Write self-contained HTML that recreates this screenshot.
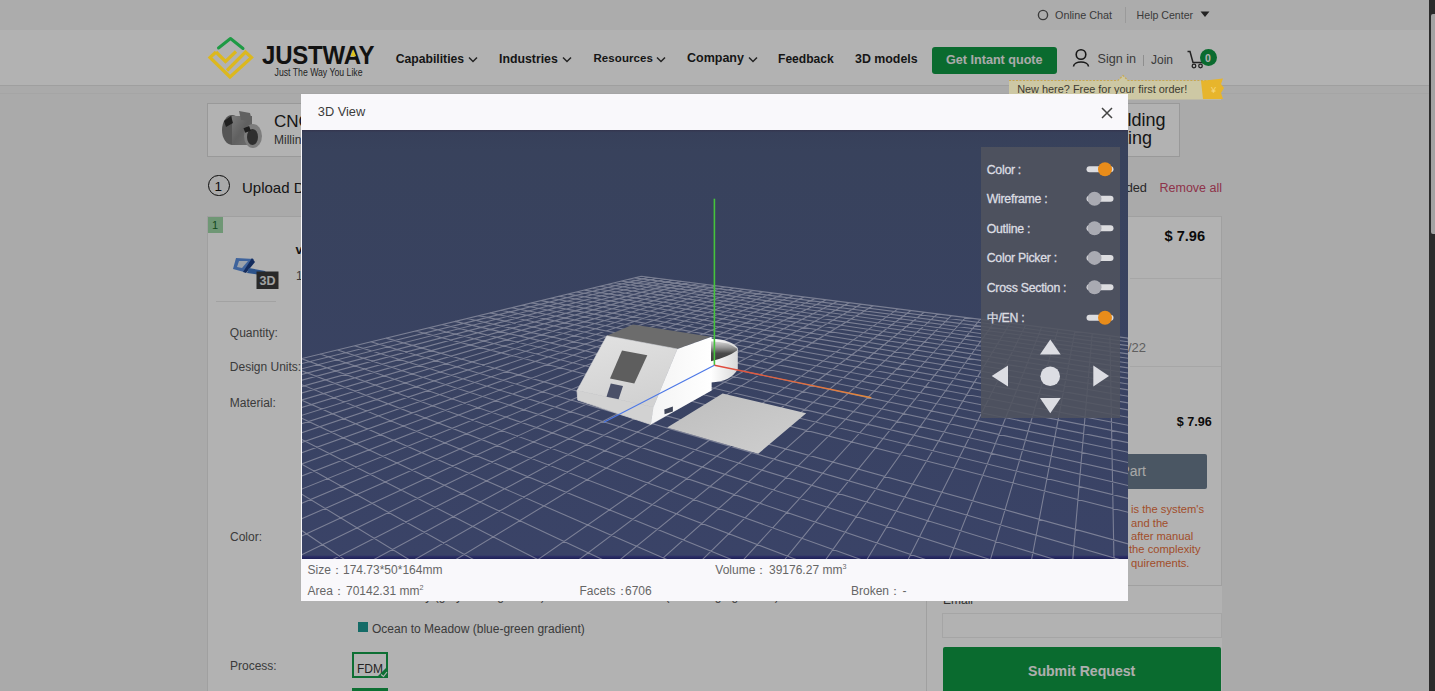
<!DOCTYPE html>
<html><head><meta charset="utf-8"><style>
html,body{margin:0;padding:0;width:1435px;height:691px;overflow:hidden;background:#f4f4f4;font-family:"Liberation Sans",sans-serif}
.r{position:absolute}
.t{position:absolute;white-space:nowrap;line-height:1}
sup{font-size:60%;vertical-align:top;position:relative;top:-1px}
#ov{position:absolute;left:0;top:0;width:1429px;height:691px;background:rgba(0,0,0,0.3)}
#sb{position:absolute;left:1429px;top:0;width:6px;height:691px;background:#2b2b2b}
</style></head><body>
<div id="page">
<div class="r" style="left:0px;top:0px;width:1429px;height:30px;background:#f7f7f7"></div>
<div class="r" style="left:0px;top:30px;width:1429px;height:55px;background:#ffffff"></div>
<div class="r" style="left:0px;top:85px;width:1429px;height:1px;background:#e4e4e4"></div>
<div class="r" style="left:0px;top:93px;width:1429px;height:1px;background:#ededed"></div>
<svg class="r" style="left:1036px;top:8px" width="14" height="14"><circle cx="7" cy="7" r="4.6" fill="none" stroke="#555" stroke-width="1.4"/></svg>
<div class="t " style="left:1055px;top:10.06px;font-size:10.8px;font-weight:400;color:#555;">Online Chat</div>
<div class="r" style="left:1125px;top:7px;width:1px;height:16px;background:#ddd"></div>
<div class="t " style="left:1136.6px;top:10.23px;font-size:10.6px;font-weight:400;color:#555;">Help Center</div>
<svg class="r" style="left:1200px;top:11px" width="10" height="7"><path d="M0.5 0.5H9.5L5 6Z" fill="#333"/></svg>
<div class="t " style="left:262px;top:43.68px;font-size:24px;font-weight:700;color:#1a1a1a;letter-spacing:-0.2px;transform:scaleY(1.1);transform-origin:0 80%">JUSTWAY</div>
<div class="t " style="left:274.6px;top:69.34px;font-size:8.7px;font-weight:400;color:#333;transform:scaleY(1.15);transform-origin:0 80%">Just The Way You Like</div>
<div class="t " style="left:395.7px;top:52.67px;font-size:12.2px;font-weight:700;color:#1f1f1f;">Capabilities</div>
<svg class="r" style="left:468px;top:56px" width="10" height="7"><path d="M1 1.5L5 5.5L9 1.5" fill="none" stroke="#333" stroke-width="1.5"/></svg>
<div class="t " style="left:499px;top:52.59px;font-size:12.3px;font-weight:700;color:#1f1f1f;">Industries</div>
<svg class="r" style="left:562px;top:56px" width="10" height="7"><path d="M1 1.5L5 5.5L9 1.5" fill="none" stroke="#333" stroke-width="1.5"/></svg>
<div class="t " style="left:593.4px;top:53.27px;font-size:11.5px;font-weight:700;color:#1f1f1f;letter-spacing:0.1px">Resources</div>
<svg class="r" style="left:656px;top:56px" width="10" height="7"><path d="M1 1.5L5 5.5L9 1.5" fill="none" stroke="#333" stroke-width="1.5"/></svg>
<div class="t " style="left:687px;top:52.42px;font-size:12.5px;font-weight:700;color:#1f1f1f;">Company</div>
<svg class="r" style="left:748px;top:56px" width="10" height="7"><path d="M1 1.5L5 5.5L9 1.5" fill="none" stroke="#333" stroke-width="1.5"/></svg>
<div class="t " style="left:778px;top:52.76px;font-size:12.1px;font-weight:700;color:#1f1f1f;">Feedback</div>
<div class="t " style="left:855px;top:52.50px;font-size:12.4px;font-weight:700;color:#1f1f1f;">3D models</div>
<div class="r" style="left:932px;top:47px;width:125px;height:27px;background:#0f9a44;border-radius:3px"></div>
<div class="t " style="left:946px;top:54.33px;font-size:12.6px;font-weight:700;color:#f4f4f4;">Get Intant quote</div>
<svg class="r" style="left:1071px;top:48px" width="20" height="20"><circle cx="10" cy="6.5" r="4.8" fill="none" stroke="#222" stroke-width="1.6"/><path d="M2.5 18.5 C3 12.5 17 12.5 17.5 18.5" fill="none" stroke="#222" stroke-width="1.6"/></svg>
<div class="t " style="left:1097.5px;top:53.33px;font-size:12.6px;font-weight:400;color:#555;">Sign in</div>
<div class="r" style="left:1143px;top:55px;width:1px;height:11px;background:#ccc"></div>
<div class="t " style="left:1151px;top:53.84px;font-size:12px;font-weight:400;color:#555;">Join</div>
<svg class="r" style="left:1186px;top:48px" width="20" height="22"><path d="M1.5 3.5H4L7 14.5H16.5L18 8" fill="none" stroke="#333" stroke-width="1.5"/><circle cx="8" cy="18" r="1.8" fill="none" stroke="#333" stroke-width="1.3"/><circle cx="14.5" cy="18" r="1.8" fill="none" stroke="#333" stroke-width="1.3"/></svg>
<div class="r" style="left:1200px;top:49px;width:17px;height:17px;border-radius:50%;background:#0f9a44"></div>
<div class="t " style="left:1205px;top:52.61px;font-size:10.5px;font-weight:700;color:#fff;">0</div>
<div class="r" style="left:207px;top:103px;width:300px;height:54px;background:#ffffff;border:1px solid #dcdcdc;box-sizing:border-box"></div>
<svg class="r" style="left:215px;top:103px" width="55" height="52">
<defs><linearGradient id="met" x1="0" y1="0" x2="1" y2="1"><stop offset="0" stop-color="#b0b0b0"/><stop offset="0.5" stop-color="#8a8a8a"/><stop offset="1" stop-color="#a0a0a0"/></linearGradient></defs>
<ellipse cx="17" cy="27" rx="10" ry="15" fill="#7a7a7a"/>
<rect x="17" y="13" width="20" height="29" fill="url(#met)"/>
<path d="M24 8 L35 10 L37 18 L26 17 Z" fill="#8c8c8c"/>
<ellipse cx="38" cy="33" rx="9" ry="12" fill="#b4b4b4"/>
<ellipse cx="37.5" cy="34" rx="5.5" ry="8" fill="#444"/>
<rect x="29" y="24" width="6" height="5" fill="#2a2a2a" transform="rotate(-20 32 26)"/>
<path d="M9 18 L16 13 L18 20 L11 24Z" fill="#2e2e2e"/>
</svg>
<div class="t " style="left:274px;top:112.61px;font-size:17px;font-weight:400;color:#222;">CNC Machining</div>
<div class="t " style="left:274px;top:134.44px;font-size:12px;font-weight:400;color:#444;">Milling, Turning</div>
<div class="r" style="left:1000px;top:103px;width:180px;height:54px;background:#ffffff;border:1px solid #dcdcdc;box-sizing:border-box"></div>
<div class="t " style="left:900px;top:110.76px;font-size:18px;font-weight:400;color:#222;width:265.5px;text-align:right">Injection Molding</div>
<div class="t " style="left:900px;top:128.76px;font-size:18px;font-weight:400;color:#222;width:252px;text-align:right">Urethane Casting</div>
<div class="r" style="left:208.3px;top:174.8px;width:21.4px;height:21.4px;border:1.6px solid #111;border-radius:50%;box-sizing:border-box"></div>
<div class="t " style="left:214.6px;top:179.87px;font-size:13.5px;font-weight:400;color:#111;">1</div>
<div class="t " style="left:242px;top:180.30px;font-size:15px;font-weight:400;color:#222;">Upload Drawings</div>
<div class="t " style="left:1000px;top:181.96px;font-size:12.8px;font-weight:400;color:#3a3a3a;width:147px;text-align:right">2 files uploaded</div>
<div class="t " style="left:1159.5px;top:182.22px;font-size:12.5px;font-weight:400;color:#cc4a6a;">Remove all</div>
<div class="r" style="left:207px;top:216px;width:720px;height:500px;background:#ffffff;border:1px solid #e6e6e6;box-sizing:border-box"></div>
<div class="r" style="left:208px;top:217px;width:15px;height:16px;background:#9fd9a8"></div>
<div class="t " style="left:212px;top:220.19px;font-size:11px;font-weight:400;color:#1c6a2c;">1</div>
<svg class="r" style="left:228px;top:252px" width="60" height="40">
<path d="M8 6 L26 7 L16 20 L5 17 Z" fill="#5a8ee0"/>
<path d="M11 9 L20 9 L14 16 L9 15Z" fill="#dfe8f5"/>
<path d="M24 6 L27 10 L18 21 L15 20 Z" fill="#1d3f86"/>
<path d="M21 16 L37 19 L40 24 L19 21 Z" fill="#3f78c8"/>
<rect x="28.5" y="19.5" width="22" height="17.5" fill="#3c3c3c"/>
<text x="39.5" y="33" font-family="Liberation Sans" font-size="12.5" font-weight="700" fill="#e8e8e8" text-anchor="middle">3D</text>
</svg>
<div class="t " style="left:295.5px;top:243.00px;font-size:13px;font-weight:700;color:#222;">v</div>
<div class="t " style="left:296px;top:269.84px;font-size:12px;font-weight:400;color:#555;">1</div>
<div class="r" style="left:216px;top:301px;width:60px;height:1px;background:#e8e8e8"></div>
<div class="t " style="left:229.8px;top:326.84px;font-size:12px;font-weight:400;color:#555;">Quantity:</div>
<div class="t " style="left:229.8px;top:361.14px;font-size:12px;font-weight:400;color:#555;">Design Units:</div>
<div class="t " style="left:229.8px;top:396.84px;font-size:12px;font-weight:400;color:#555;">Material:</div>
<div class="t " style="left:230px;top:531.34px;font-size:12px;font-weight:400;color:#555;">Color:</div>
<div class="t " style="left:230px;top:660.14px;font-size:12px;font-weight:400;color:#555;">Process:</div>
<div class="r" style="left:358px;top:622px;width:10px;height:10px;background:#1d9a94"></div>
<div class="t " style="left:372px;top:622.54px;font-size:12px;font-weight:400;color:#555;">Ocean to Meadow (blue-green gradient)</div>
<div class="r" style="left:358px;top:591px;width:10px;height:10px;background:#ddd"></div>
<div class="t " style="left:372px;top:590.34px;font-size:12px;font-weight:400;color:#555;">Snow Gray (gray-white gradient)</div>
<div class="r" style="left:582px;top:591px;width:10px;height:10px;background:#e06030"></div>
<div class="t " style="left:596px;top:590.34px;font-size:12px;font-weight:400;color:#555;">Gold Sunset (red-orange gradient)</div>
<div class="r" style="left:352px;top:652px;width:36px;height:26px;border:2px solid #13a04a;box-sizing:border-box;background:#fff"></div>
<div class="t " style="left:357px;top:662.84px;font-size:12px;font-weight:400;color:#333;">FDM</div>
<svg class="r" style="left:376px;top:666px" width="12" height="12"><path d="M12 0V12H0Z" fill="#13a04a"/><path d="M5 8.5L7.5 10.5L11 6" stroke="#fff" stroke-width="1.2" fill="none"/></svg>
<div class="r" style="left:352px;top:688px;width:36px;height:10px;background:#13a04a"></div>
<div class="r" style="left:926px;top:216px;width:296px;height:370px;background:#ffffff;border:1px solid #e6e6e6;box-sizing:border-box"></div>
<div class="t " style="left:1164.5px;top:228.64px;font-size:14.6px;font-weight:700;color:#111;">$ 7.96</div>
<div class="r" style="left:1130px;top:278px;width:91px;height:1px;background:#eee"></div>
<div class="t " style="left:1128px;top:341.40px;font-size:13px;font-weight:400;color:#888;">/22</div>
<div class="r" style="left:1130px;top:366px;width:91px;height:1px;background:#eee"></div>
<div class="t " style="left:1176.8px;top:416.03px;font-size:12.6px;font-weight:700;color:#111;">$ 7.96</div>
<div class="r" style="left:940px;top:454px;width:267px;height:35px;background:#6a7c8e;border-radius:2px"></div>
<div class="t " style="left:1125px;top:464.15px;font-size:14px;font-weight:400;color:#f0f0f0;text-align:right;left:auto;right:289px">Add Part</div>
<div class="t " style="left:1131px;top:504.32px;font-size:11.2px;font-weight:400;color:#e8703c;">is the system's</div>
<div class="t " style="left:1131px;top:517.52px;font-size:11.2px;font-weight:400;color:#e8703c;">and the</div>
<div class="t " style="left:1131px;top:531.22px;font-size:11.2px;font-weight:400;color:#e8703c;">after manual</div>
<div class="t " style="left:1129px;top:544.22px;font-size:11.2px;font-weight:400;color:#e8703c;">the complexity</div>
<div class="t " style="left:1131px;top:557.52px;font-size:11.2px;font-weight:400;color:#e8703c;">quirements.</div>
<div class="r" style="left:926px;top:586px;width:296px;height:110px;background:#ffffff;border-left:1px solid #e6e6e6;box-sizing:border-box"></div>
<div class="t " style="left:943px;top:594.34px;font-size:12px;font-weight:400;color:#444;">Email</div>
<div class="r" style="left:942px;top:613px;width:280px;height:25px;background:#fff;border:1px solid #ececec;box-sizing:border-box"></div>
<div class="r" style="left:943px;top:647px;width:278px;height:50px;background:#0f9a44;border-radius:2px"></div>
<div class="t " style="left:1028px;top:663.56px;font-size:14.1px;font-weight:700;color:#fafafa;">Submit Request</div>

</div>
<div id="ov"></div>
<svg class="r" style="left:204px;top:33px" width="56" height="50" viewBox="0 0 56 50">
<path d="M14.5 15 L26.5 5.5 L39 15.5" fill="none" stroke="#1e9a44" stroke-width="3" stroke-linecap="round" stroke-linejoin="round"/>
<path d="M12 19 L6 24.5 L26 44 L47.5 24.5 L41.5 19 L23 37.5 M12 19 L21.5 28.5 L32 18.5" fill="none" stroke="#dcb81e" stroke-width="3.2" stroke-linejoin="miter"/>
</svg>

<svg class="r" style="left:349px;top:48px" width="9" height="10"><path d="M4.3 1.2 L7.2 8.3 L1.4 8.3Z" fill="#dcc21e"/></svg>
<svg class="r" style="left:1007px;top:74px" width="222" height="28"><path d="M2 6.5 H111 L116 1.5 L121 6.5 H214 V25.5 H2 Z" fill="#cdc8a4"/><path d="M2 6.5 H111 L116 1.5 L121 6.5 H214" fill="none" stroke="#c9a94e" stroke-width="1.2" stroke-dasharray="2 1.5"/><path d="M194 7 L216 4.5 L214 10 L217 14 L214 19 L216 25 H196 Z" fill="#e7b52c"/><text x="204" y="19" font-family="Liberation Sans" font-size="9" fill="#f6d880">¥</text></svg><div class="t " style="left:1017.2px;top:83.77px;font-size:10.9px;font-weight:400;color:#3c3a30;">New here? Free for your first order!</div>

<div id="modal">
<div class="r" style="left:301px;top:94px;width:827px;height:507px;background:#f9f8fb"></div>
<div class="t " style="left:317.8px;top:106.16px;font-size:12.8px;font-weight:400;color:#3c3c3c;">3D View</div>
<svg class="r" style="left:1100px;top:106px" width="14" height="14"><path d="M2 2L12 12M12 2L2 12" stroke="#444" stroke-width="1.5"/></svg>
<svg class="r" style="left:302px;top:130px" width="826" height="429" viewBox="0 0 826 429">
<defs>
<linearGradient id="bg" x1="0" y1="0" x2="0" y2="1"><stop offset="0" stop-color="#34354e"/><stop offset="0.006" stop-color="#37405a"/><stop offset="0.05" stop-color="#38425c"/><stop offset="0.991" stop-color="#3a4367"/><stop offset="0.994" stop-color="#2c2f66"/><stop offset="1" stop-color="#1e2058"/></linearGradient>
<linearGradient id="slope" x1="0" y1="0" x2="0.3" y2="1"><stop offset="0" stop-color="#e2e2e2"/><stop offset="1" stop-color="#d2d2d2"/></linearGradient>
<linearGradient id="side" x1="0" y1="0" x2="1" y2="0"><stop offset="0" stop-color="#f4f4f4"/><stop offset="1" stop-color="#ffffff"/></linearGradient>
<linearGradient id="cyl" x1="0" y1="0" x2="1" y2="0"><stop offset="0" stop-color="#ffffff"/><stop offset="1" stop-color="#d8d8d8"/></linearGradient>
<linearGradient id="inner" x1="0" y1="0" x2="0" y2="1"><stop offset="0" stop-color="#d4d4d4"/><stop offset="0.3" stop-color="#9a9a9a"/><stop offset="0.6" stop-color="#4a4a4a"/><stop offset="1" stop-color="#3e3e3e"/></linearGradient>
<linearGradient id="plate" x1="0" y1="0" x2="1" y2="1"><stop offset="0" stop-color="#bdbdbd"/><stop offset="1" stop-color="#cfcfcf"/></linearGradient>
<linearGradient id="redax" x1="0" y1="0" x2="1" y2="0"><stop offset="0" stop-color="#e0483e"/><stop offset="1" stop-color="#e48a3c"/></linearGradient>
</defs>
<rect width="826" height="429" fill="url(#bg)"/>
<path d="M339.2 146.3L-652.2 386.5M346.9 147.3L-655.3 396.4M354.8 148.3L-658.6 406.8M362.8 149.3L-662.1 417.8M370.9 150.3L-665.8 429.5M379.2 151.4L-669.8 441.9M387.6 152.4L-674.0 455.1M396.2 153.5L-678.4 469.3M404.9 154.6L-683.2 484.4M413.8 155.8L-688.3 500.5M422.9 156.9L-693.8 517.9M432.2 158.1L-699.8 536.7M441.6 159.3L-706.2 557.0M451.2 160.5L-713.2 578.9M461.1 161.8L-720.7 602.8M471.1 163.0L-729.0 628.9M481.3 164.3L-738.0 657.5M491.7 165.6L-748.0 689.0M502.3 167.0L-759.1 723.8M513.2 168.4L-771.3 762.6M524.3 169.8L-785.1 806.0M535.6 171.2L-800.6 854.9M547.2 172.7L-818.1 910.4M559.0 174.2L-838.3 973.9M571.0 175.7L-861.5 1047.4M596.0 178.9L-921.1 1235.3M608.9 180.5L-959.9 1358.1M622.1 182.2L-1007.7 1508.9M635.6 183.9L-1067.7 1698.4M649.4 185.7L-1145.4 1943.8M663.6 187.5L-1250.1 2274.1M678.1 189.3L-1398.5 2742.7M692.9 191.2L-1625.4 3459.3M708.1 193.1L-1465.4 3782.7M723.7 195.1L-1075.7 3782.4M739.7 197.1L-686.0 3782.0M756.1 199.2L-296.3 3781.7M772.9 201.3L93.4 3781.3M790.2 203.5L483.1 3781.0M807.9 205.8L872.8 3780.7M826.1 208.1L1262.5 3780.3M844.8 210.5L1652.1 3780.0M864.0 212.9L2041.8 3779.6M883.8 215.4L2431.5 3779.3M904.1 218.0L2821.2 3779.0M925.0 220.6L3210.9 3778.6M946.6 223.4L3600.6 3778.3M968.7 226.2L3990.3 3778.0M991.6 229.1L4380.0 3777.6M1015.1 232.1L4769.7 3777.3M339.2 146.3L1015.1 232.1M332.8 147.9L1020.3 237.0M326.2 149.5L1025.7 242.1M319.4 151.1L1031.5 247.5M312.4 152.8L1037.5 253.2M305.2 154.5L1043.9 259.2M297.8 156.3L1050.6 265.6M290.2 158.2L1057.7 272.3M282.3 160.1L1065.2 279.4M274.2 162.0L1073.2 287.0M265.9 164.1L1081.7 295.0M257.2 166.2L1090.8 303.5M248.3 168.3L1100.5 312.7M239.1 170.6L1110.8 322.5M229.6 172.9L1121.9 332.9M219.8 175.2L1133.9 344.2M209.6 177.7L1146.8 356.4M199.1 180.3L1160.7 369.5M188.1 182.9L1175.8 383.8M176.8 185.6L1192.2 399.3M165.1 188.5L1210.2 416.3M152.9 191.4L1229.9 434.9M140.2 194.5L1251.7 455.4M127.1 197.7L1275.7 478.2M113.4 201.0L1302.5 503.5M84.2 208.1L1366.5 563.9M68.7 211.8L1405.1 600.3M52.6 215.8L1449.4 642.1M35.6 219.9L1500.7 690.6M18.0 224.1L1560.9 747.4M-0.6 228.6L1632.5 815.0M-20.0 233.3L1719.1 896.8M-40.4 238.3L1825.9 997.7M-61.8 243.5L1961.0 1125.2M-84.3 248.9L2137.3 1291.6M-108.0 254.7L2376.9 1518.0M-133.0 260.7L2721.7 1843.5M-159.4 267.1L3260.3 2352.0M-187.4 273.9L4219.7 3257.9M-217.0 281.1L4376.0 3777.6M-248.5 288.7L3765.6 3778.2M-282.0 296.8L3155.2 3778.7M-317.6 305.5L2544.8 3779.2M-355.7 314.7L1934.4 3779.7M-396.4 324.6L1324.1 3780.3M-440.2 335.2L713.7 3780.8M-487.2 346.5L103.3 3781.3M-537.9 358.8L-507.1 3781.9M-592.7 372.1L-1117.5 3782.4M-652.2 386.5L-1727.9 3782.9" stroke="#a3a5b3" stroke-width="1.1" fill="none" stroke-opacity="0.62"/>

<polygon points="304.8,205.8 375.4,219.0 408.9,206.7 331.0,194.5" fill="#6c6c6c"/>
<polygon points="304.8,205.8 375.4,219.0 351.4,277.0 275.0,260.6" fill="url(#slope)" stroke="#d6d6d6" stroke-width="0.6"/>
<polygon points="275.0,260.6 351.4,277.0 348.8,294.5 275.8,270.1" fill="#d2d2d2" stroke="#d2d2d2" stroke-width="0.8"/>
<polygon points="375.4,219.0 409.6,206.7 409.6,260.5 348.8,294.5 351.4,277.0" fill="url(#side)"/>
<polygon points="320.0,220.6 345.3,225.3 332.3,253.6 308.0,248.4" fill="#5e5e5e"/>
<polygon points="308.8,253.6 321.0,255.9 316.6,269.3 304.5,266.7" fill="#4a5068"/>
<polygon points="362.3,279.6 370.9,276.6 370.9,281.4 362.6,284.2" fill="#3e4458"/>
<path d="M409 208.8 Q429 209.5 435.79999999999995 218 L435.79999999999995 239 Q429 251.5 409 252.5 Z" fill="url(#cyl)"/>
<path d="M409 211.3 Q427 211.8 435 218.5 L435 220.5 Q426 227 409 231.3 Z" fill="url(#inner)"/>
<polygon points="420.6,263.5 504.2,283.2 456.2,323.8 365.2,297.4" fill="url(#plate)"/>


<line x1="412.4" y1="68.69999999999999" x2="412.4" y2="235.3" stroke="#45c43c" stroke-width="1.6"/>
<line x1="412.4" y1="235.3" x2="569.3" y2="267.8" stroke="url(#redax)" stroke-width="1.4"/>
<line x1="412.4" y1="235.3" x2="301.9" y2="292.2" stroke="#4d78e6" stroke-width="1.2"/>

<rect x="679" y="17" width="139" height="271" fill="#50535f" fill-opacity="0.88"/>
<text x="684.7" y="43.599999999999994" font-family="Liberation Sans" font-size="12.3" fill="#dcdde2" stroke="#dcdde2" stroke-width="0.3" letter-spacing="-0.25">Color<tspan dx="3">:</tspan></text>
<rect x="784.5" y="36.3" width="27" height="6" rx="3" fill="#dcdcdf"/>
<circle cx="803" cy="39.3" r="7" fill="#e88c1a"/>
<text x="684.7" y="73" font-family="Liberation Sans" font-size="12.3" fill="#dcdde2" stroke="#dcdde2" stroke-width="0.3" letter-spacing="-0.25">Wireframe<tspan dx="3">:</tspan></text>
<rect x="784.5" y="65.7" width="27" height="6" rx="3" fill="#dcdcdf"/>
<circle cx="792.5" cy="68.7" r="7" fill="#a9aab2"/>
<text x="684.7" y="102.6" font-family="Liberation Sans" font-size="12.3" fill="#dcdde2" stroke="#dcdde2" stroke-width="0.3" letter-spacing="-0.25">Outline<tspan dx="3">:</tspan></text>
<rect x="784.5" y="95.3" width="27" height="6" rx="3" fill="#dcdcdf"/>
<circle cx="792.5" cy="98.3" r="7" fill="#a9aab2"/>
<text x="684.7" y="132.2" font-family="Liberation Sans" font-size="12.3" fill="#dcdde2" stroke="#dcdde2" stroke-width="0.3" letter-spacing="-0.25">Color Picker<tspan dx="3">:</tspan></text>
<rect x="784.5" y="124.89999999999999" width="27" height="6" rx="3" fill="#dcdcdf"/>
<circle cx="792.5" cy="127.89999999999999" r="7" fill="#a9aab2"/>
<text x="684.7" y="161.60000000000002" font-family="Liberation Sans" font-size="12.3" fill="#dcdde2" stroke="#dcdde2" stroke-width="0.3" letter-spacing="-0.25">Cross Section<tspan dx="3">:</tspan></text>
<rect x="784.5" y="154.3" width="27" height="6" rx="3" fill="#dcdcdf"/>
<circle cx="792.5" cy="157.3" r="7" fill="#a9aab2"/>
<text x="684.7" y="192" font-family="Liberation Sans" font-size="12.3" fill="#dcdde2" stroke="#dcdde2" stroke-width="0.3" letter-spacing="-0.25">中/EN<tspan dx="3">:</tspan></text>
<rect x="784.5" y="184.7" width="27" height="6" rx="3" fill="#dcdcdf"/>
<circle cx="803" cy="187.7" r="7" fill="#e88c1a"/>
<path d="M748.3 209.5 L758.7 224.5 L738 224.5Z" fill="#dcdde3"/>
<path d="M748.3 283.3 L758.7 268 L738 268Z" fill="#dcdde3"/>
<path d="M689.7 246 L706 235.5 L706 256.5Z" fill="#dcdde3"/>
<path d="M807 246 L791.3 235.5 L791.3 256.5Z" fill="#dcdde3"/>
<circle cx="748.2" cy="246.2" r="9.8" fill="#dcdde3"/>
</svg>
<div class="t " style="left:307.6px;top:563.84px;font-size:12px;font-weight:400;color:#666;">Size：</div>
<div class="t " style="left:343px;top:563.84px;font-size:12px;font-weight:400;color:#666;">174.73*50*164mm</div>
<div class="t " style="left:715.3px;top:563.84px;font-size:12px;font-weight:400;color:#666;">Volume：</div>
<div class="t " style="left:769px;top:563.84px;font-size:12px;font-weight:400;color:#666;">39176.27 mm<sup>3</sup></div>
<div class="t " style="left:307.6px;top:585.34px;font-size:12px;font-weight:400;color:#666;">Area：</div>
<div class="t " style="left:346px;top:585.34px;font-size:12px;font-weight:400;color:#666;">70142.31 mm<sup>2</sup></div>
<div class="t " style="left:579.5px;top:585.34px;font-size:12px;font-weight:400;color:#666;">Facets：</div>
<div class="t " style="left:625px;top:585.34px;font-size:12px;font-weight:400;color:#666;">6706</div>
<div class="t " style="left:851px;top:585.34px;font-size:12px;font-weight:400;color:#666;">Broken：</div>
<div class="t " style="left:902.5px;top:585.34px;font-size:12px;font-weight:400;color:#666;">-</div>

</div>
<div id="sb"></div>
<div class="r" style="left:1431px;top:14px;width:4px;height:220px;background:#a3a3a3;border-radius:2px 0 0 2px"></div>
</body></html>
